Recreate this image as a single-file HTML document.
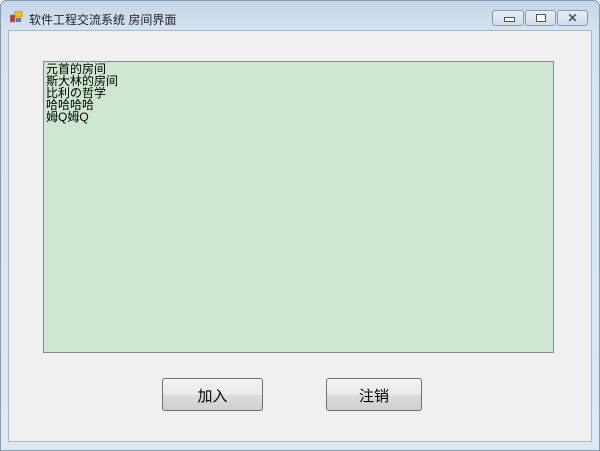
<!DOCTYPE html>
<html><head><meta charset="utf-8"><style>
body{margin:0;width:600px;height:451px;overflow:hidden;background:#fff;position:relative;font-family:"Liberation Sans","Noto Sans CJK SC",sans-serif}
.frame{position:absolute;left:0;top:0;width:598px;height:449px;background:linear-gradient(#c4d5e8,#d6e3f1 30px,#dce8f4);border:1px solid #8a9bb0;border-radius:6px 6px 0 0}
.client{position:absolute;left:8px;top:30px;width:584px;height:412px;background:#f0f0f0;border:1px solid #a9b8c9;box-sizing:border-box}
.title{position:absolute;left:29px;top:11px;font-size:12px;color:#222}
.icon{position:absolute;left:10px;top:11px;width:13px;height:12px}
.list{position:absolute;left:43px;top:61px;width:511px;height:292px;background:#cee7d1;border:1px solid #828790;box-sizing:border-box;font-size:12px;line-height:12px;padding:1px 2px;color:#000}
.btn{position:absolute;top:378px;height:33px;border:1px solid #707070;border-radius:3px;box-sizing:border-box;background:linear-gradient(#f2f2f2 0%,#ebebeb 50%,#dddddd 51%,#cfcfcf 100%);font-size:15px;text-align:center;line-height:35px}
.cb{position:absolute;top:10px;height:16px;border:1px solid #8899aa;border-radius:3px;box-sizing:border-box;background:linear-gradient(#e6eef7,#d0dcea)}
</style></head><body>
<div class="frame"></div>
<svg class="icon" viewBox="0 0 13 12"><rect x="0" y="4" width="5" height="7" fill="#c33" stroke="#888" stroke-width=".6"/><rect x="5" y="0" width="7" height="6" fill="#f5c400" stroke="#a80" stroke-width=".6"/><rect x="6" y="7" width="5" height="4" fill="#4a7fd0"/></svg>
<div class="title">软件工程交流系统 房间界面</div>
<div class="cb" style="left:492px;width:32px"><div style="position:absolute;left:11px;top:6px;width:9px;height:3px;border:1px solid #555;background:#fff"></div></div>
<div class="cb" style="left:525px;width:31px"><div style="position:absolute;left:10px;top:3px;width:8px;height:6px;border:1px solid #555;background:#fff"></div></div>
<div class="cb" style="left:557px;width:31px;font-size:12px;text-align:center;line-height:14px;color:#555;font-weight:bold">✕</div>
<div class="client"></div>
<div class="list">元首的房间<br>斯大林的房间<br>比利の哲学<br>哈哈哈哈<br>姆Q姆Q</div>
<div class="btn" style="left:162px;width:101px">加入</div>
<div class="btn" style="left:326px;width:96px">注销</div>
</body></html>
